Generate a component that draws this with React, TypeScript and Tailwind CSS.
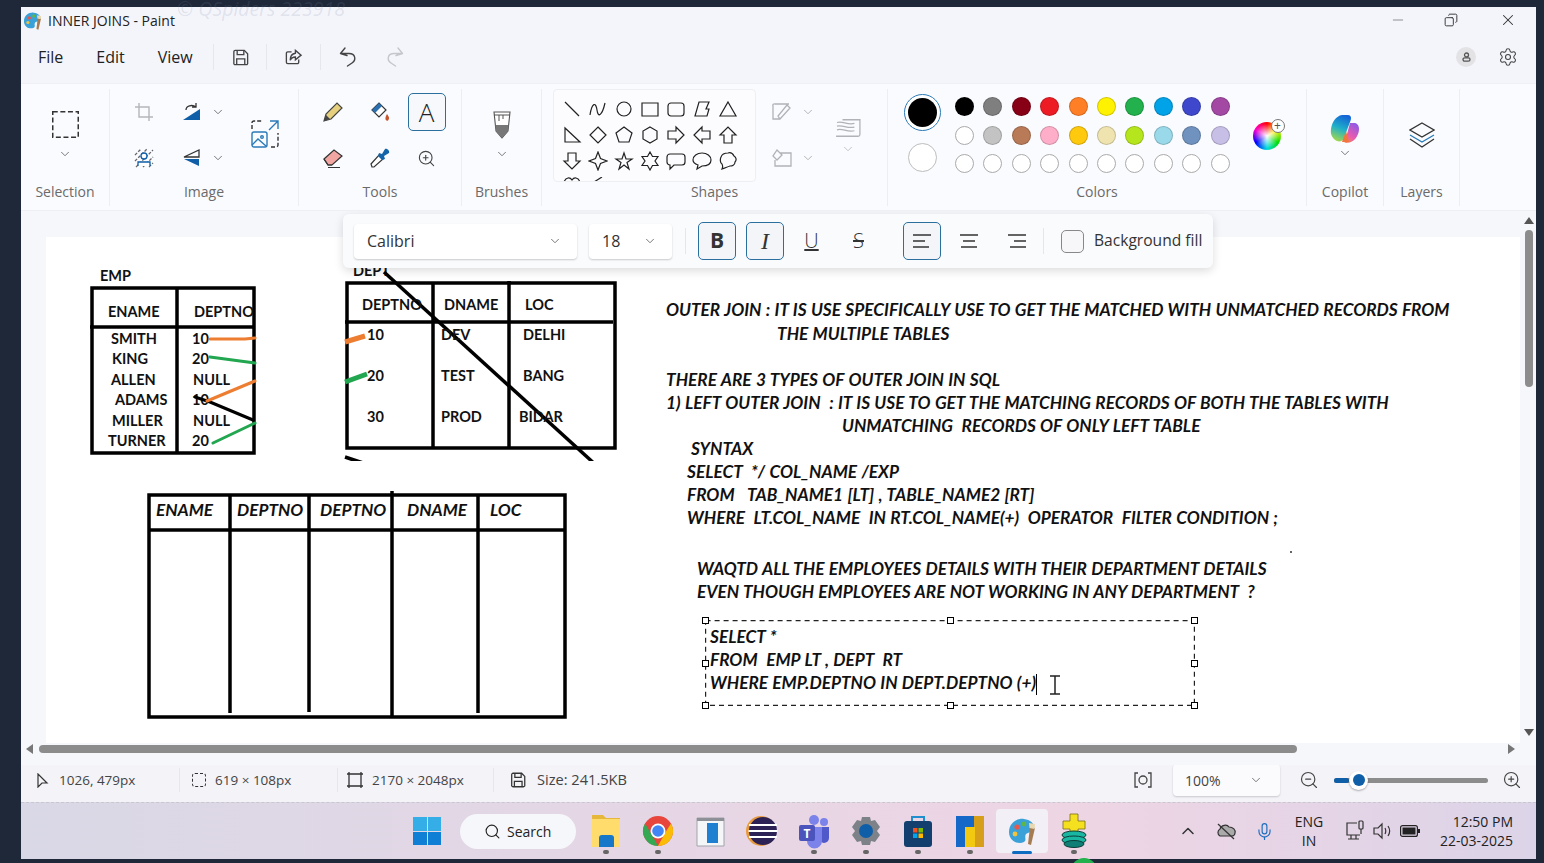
import React from 'react';
import {
  ChevronDown, ChevronUp, Copy, Mic, Minus, Search, Settings, X, ZoomIn, ZoomOut,
} from 'lucide-react';

const ROW1 = ['#000000', '#7f7f7f', '#880015', '#ed1c24', '#ff7f27', '#fff200', '#22b14c', '#00a2e8', '#3f48cc', '#a349a4'];
const ROW2 = ['#ffffff', '#c3c3c3', '#b97a57', '#ffaec9', '#ffc90e', '#efe4b0', '#b5e61d', '#99d9ea', '#7092be', '#c8bfe7'];

const SHAPES = [
  'M3 3L17 17', 'M2 16C4 3 8 3 9 11S14 17 17 4', 'M17 10A7 7 0 1 1 3 10A7 7 0 1 1 17 10Z', 'M2 4H18V17H2Z',
  'M5 4H15A3 3 0 0 1 18 7V14A3 3 0 0 1 15 17H5A3 3 0 0 1 2 14V7A3 3 0 0 1 5 4Z', 'M7 3H17L14 10H17L15 17H3Z', 'M10 3L18 17H2Z',
  'M3 3V17H18Z', 'M10 2L18 10L10 18L2 10Z', 'M10 2L18 8L15 17H5L2 8Z', 'M10 2L17 6V14L10 18L3 14V6Z',
  'M2 6H10V2L18 10L10 18V14H2Z', 'M18 6H10V2L2 10L10 18V14H18Z', 'M6 18V10H2L10 2L18 10H14V18Z',
  'M6 2V10H2L10 18L18 10H14V2Z', 'M10 1L12.5 7.5L19 10L12.5 12.5L10 19L7.5 12.5L1 10L7.5 7.5Z',
  'M10 2L12 8H18L13 11.5L15 18L10 14L5 18L7 11.5L2 8H8Z', 'M10 1L12.5 5.5H18L15 10L18 14.5H12.5L10 19L7.5 14.5H2L5 10L2 5.5H7.5Z',
  'M4 3H16A3 3 0 0 1 19 6V11A3 3 0 0 1 16 14H8L4 18V14A3 3 0 0 1 1 11V6A3 3 0 0 1 4 3Z',
  'M10 2C15 2 19 5 19 9S15 15 10 15L5 18L6 14C3 13 1 11 1 9C1 5 5 2 10 2Z',
  'M10 2C13 1 15 3 16 5C18 6 19 9 17 11C17 14 14 15 12 15C9 16 7 17 4 18C5 16 5 15 4 13C2 12 2 8 3 6C4 3 7 2 10 2Z',
  'M2 5C4 0 8 0 10 3C12 0 16 0 18 5', 'M14 0L6 5',
];

const NOTES: [string, string][] = [
  ['OUTER JOIN : IT IS USE SPECIFICALLY USE TO GET THE MATCHED WITH UNMATCHED RECORDS FROM', 'ml-0 h-[24px]'],
  ['THE MULTIPLE TABLES', 'ml-[111px]'],
  ['\u00a0', 'ml-0'],
  ['THERE ARE 3 TYPES OF OUTER JOIN IN SQL', 'ml-0'],
  ['1) LEFT OUTER JOIN  : IT IS USE TO GET THE MATCHING RECORDS OF BOTH THE TABLES WITH', 'ml-0'],
  ['UNMATCHING  RECORDS OF ONLY LEFT TABLE', 'ml-[176px]'],
  ['SYNTAX', 'ml-[25px]'],
  ['SELECT  */ COL_NAME /EXP', 'ml-[21px]'],
  ['FROM   TAB_NAME1 [LT] , TABLE_NAME2 [RT]', 'ml-[21px]'],
  ['WHERE  LT.COL_NAME  IN RT.COL_NAME(+)  OPERATOR  FILTER CONDITION ;', 'ml-[21px]'],
];

const APPS = ['explorer', 'chrome', 'box', 'eclipse', 'teams', 'settings', 'store', 'bi', 'paint', 'db'];

const Chev = ({ className = '' }: { className?: string }) => (
  <ChevronDown className={`w-[14px] h-[14px] text-[#666] ${className}`} strokeWidth={1.5} />
);

const PaintIcon = ({ size }: { size: number }) => (
  <svg width={size} height={size} viewBox="0 0 32 32">
    <path d="M3 17C3 8 11 3 18 4C25 5 29 9 28 14C27 18 22 17 20 19C18 22 21 25 18 27C12 30 3 26 3 17Z" fill="#3aa0d8" />
    <circle cx="11" cy="12" r="2.6" fill="#e9574b" />
    <circle cx="18" cy="9" r="2.4" fill="#5fb648" />
    <circle cx="9" cy="19" r="2.4" fill="#f3c33c" />
    <path d="M24 12L29 13L25 30L22 29Z" fill="#a57c52" />
    <path d="M23 8L29 9L28.5 14L23.5 13Z" fill="#e8d9b4" />
  </svg>
);

const AppIcon = ({ name }: { name: string }) => {
  if (name === 'explorer') return (
    <svg width="32" height="40" viewBox="0 0 32 40">
      <path d="M2 4H13L16 7H30V36H2Z" fill="#e5b83c" /><path d="M2 8H30V36H2Z" fill="#ffdc6b" />
      <path d="M9 27A3 3 0 0 1 12 24H21A3 3 0 0 1 24 27V36H9Z" fill="#1778c9" />
    </svg>
  );
  if (name === 'chrome') return (
    <svg width="32" height="40" viewBox="0 0 32 40">
      <circle cx="16" cy="20" r="15" fill="#e8453c" />
      <path d="M16 35A15 15 0 0 1 3 12.5L10 24L16 35Z" fill="#34a853" />
      <path d="M16 35L23 22L29 12.5A15 15 0 0 1 16 35Z" fill="#fbbc05" />
      <circle cx="16" cy="20" r="7.5" fill="#fff" /><circle cx="16" cy="20" r="5.8" fill="#4285f4" />
    </svg>
  );
  if (name === 'box') return (
    <svg width="32" height="40" viewBox="0 0 32 40">
      <path d="M3 7H30V35H3Z" fill="#f4f6f8" stroke="#a0a4aa" /><path d="M3 7H30V10H3Z" fill="#8d9197" />
      <path d="M13 12H24V32H13Z" fill="#1f7fd1" />
    </svg>
  );
  if (name === 'eclipse') return (
    <svg width="32" height="40" viewBox="0 0 32 40">
      <circle cx="15" cy="20" r="15" fill="#e89a3c" /><circle cx="17" cy="20" r="14" fill="#2c2255" />
      <path d="M3 14H31M2.5 20H31.5M3 26H31" stroke="#ffffff" strokeWidth="2" />
    </svg>
  );
  if (name === 'teams') return (
    <svg width="32" height="40" viewBox="0 0 32 40">
      <circle cx="26" cy="11" r="4" fill="#7b83eb" /><circle cx="16" cy="9" r="5" fill="#7b83eb" />
      <path d="M21 16H31V27A5 5 0 0 1 21 27Z" fill="#5059c9" /><path d="M9 16H24V30A7 7 0 0 1 9 30Z" fill="#7b83eb" />
      <rect x="1" y="14" width="16" height="16" rx="2" fill="#4b53bc" />
      <text x="9" y="27" fontSize="12" fontWeight="700" textAnchor="middle" fill="#fff" fontFamily="Open Sans, sans-serif">T</text>
    </svg>
  );
  if (name === 'settings') return (
    <svg width="32" height="40" viewBox="0 0 32 40">
      <path d="M12 6H20L21 10L25 9L30 16L27 20L30 24L25 31L21 30L20 34H12L11 30L7 31L2 24L5 20L2 16L7 9L11 10Z" fill="#7d8288" />
      <circle cx="16" cy="20" r="7" fill="#0f5ea8" />
    </svg>
  );
  if (name === 'store') return (
    <svg width="32" height="40" viewBox="0 0 32 40">
      <path d="M10 10V6H22V10" fill="none" stroke="#1f8fd0" strokeWidth="2" />
      <rect x="2" y="10" width="28" height="26" rx="3" fill="#123f6d" />
      <path d="M11 17H15.5V21.5H11Z" fill="#f25022" /><path d="M16.5 17H21V21.5H16.5Z" fill="#7fba00" />
      <path d="M11 22.5H15.5V27H11Z" fill="#00a4ef" /><path d="M16.5 22.5H21V27H16.5Z" fill="#ffb900" />
    </svg>
  );
  if (name === 'bi') return (
    <svg width="32" height="40" viewBox="0 0 32 40">
      <path d="M2 5H30V36H2Z" fill="#1668c8" /><path d="M20 5H30V36H20Z" fill="#d69e19" />
      <path d="M11 16H21V36H11Z" fill="#f2c811" />
    </svg>
  );
  if (name === 'paint') return <PaintIcon size={32} />;
  return (
    <svg width="32" height="40" viewBox="0 0 32 40">
      <path d="M12 3H20V10H27V18H20V22H12V18H5V10H12Z" fill="#f5e020" stroke="#7a7010" strokeWidth="0.8" />
      <ellipse cx="16" cy="24" rx="12" ry="4" fill="#19b6a2" stroke="#0b3d38" />
      <ellipse cx="16" cy="29" rx="12" ry="4" fill="#19b6a2" stroke="#0b3d38" />
      <ellipse cx="16" cy="33" rx="10" ry="3.5" fill="#0f7f76" stroke="#0b3d38" />
    </svg>
  );
};

const EmpTable = () => (
  <svg className="absolute left-0 top-0 w-full h-full" viewBox="46 237 1474 506" fontFamily="Lato, sans-serif" fontWeight="700" fontSize="14.5" fill="#111">
    <text x="100" y="281">EMP</text>
    <g fill="none" stroke="#000" strokeWidth="3.5">
      <path d="M92 288H254V453H92Z" /><path d="M177 288V453" /><path d="M90 327H254" />
    </g>
    <text x="108" y="317">ENAME</text><text x="194" y="317">DEPTNO</text>
    <text x="111" y="344">SMITH</text><text x="192" y="344">10</text>
    <text x="112" y="364">KING</text><text x="192" y="364">20</text>
    <text x="111" y="385">ALLEN</text><text x="193" y="385">NULL</text>
    <text x="115" y="405">ADAMS</text><text x="192" y="405">10</text>
    <text x="112" y="426">MILLER</text><text x="193" y="426">NULL</text>
    <text x="108" y="446">TURNER</text><text x="192" y="446">20</text>
    <g fill="none" strokeWidth="3" strokeLinecap="round">
      <path d="M210 339H245L255 338" stroke="#ed7d31" />
      <path d="M210 357L255 363" stroke="#22a650" />
      <path d="M195 397L210 402L253 420" stroke="#000" />
      <path d="M207 401L255 381" stroke="#ed7d31" />
      <path d="M213 443L255 423" stroke="#22a650" />
    </g>

    <text x="353" y="276">DEPT</text>
    <g fill="none" stroke="#000" strokeWidth="3.5">
      <path d="M347 283H615V448H347Z" /><path d="M433 283V448" /><path d="M509 281V448" /><path d="M345 322H613" />
      <path d="M384 272L597 466" /><path d="M345 457L366 464" />
    </g>
    <rect x="340" y="461" width="280" height="10" fill="#fff" />
    <text x="362" y="310">DEPTNO</text><text x="444" y="310">DNAME</text><text x="525" y="310">LOC</text>
    <text x="367" y="340">10</text><text x="441" y="340">DEV</text><text x="523" y="340">DELHI</text>
    <text x="367" y="381">20</text><text x="441" y="381">TEST</text><text x="523" y="381">BANG</text>
    <text x="367" y="422">30</text><text x="441" y="422">PROD</text><text x="519" y="422">BIDAR</text>
    <path d="M345 342L365 336" stroke="#ed7d31" strokeWidth="5" /><path d="M345 382L367 374" stroke="#22a650" strokeWidth="5" />

    <g fill="none" stroke="#000" strokeWidth="3.5">
      <path d="M149 495H565V717H149Z" /><path d="M149 530H565" />
      <path d="M230 495V713" /><path d="M309 495V712" /><path d="M392 491V717" /><path d="M478 495V713" />
    </g>
    <g fontSize="17.2" fontStyle="italic">
      <text x="156" y="516">ENAME</text><text x="237" y="516">DEPTNO</text><text x="320" y="516">DEPTNO</text>
      <text x="407" y="516">DNAME</text><text x="490" y="516">LOC</text>
    </g>
    <circle cx="1291" cy="552" r="1" fill="#333" />
  </svg>
);

const Handle = ({ className }: { className: string }) => (
  <span className={`absolute w-[7px] h-[7px] bg-white border border-black ${className}`} />
);

const Section = ({ width, label, children }: { width: string; label: string; children: React.ReactNode }) => (
  <section className={`${width} h-[117px] shrink-0 flex flex-col border-r border-[#eceef2]`}>
    <div className="h-[92px] flex">{children}</div>
    <div className="h-[21px] flex items-center justify-center text-[14px] text-[#6a6a6a]">{label}</div>
  </section>
);

const Cell = ({ className = '', children }: { className?: string; children: React.ReactNode }) => (
  <div className={`h-[46px] flex items-center justify-center ${className}`}>{children}</div>
);

export default function App() {
  return (
    <div className="w-[1544px] h-[863px] bg-[#1e2839] pl-[21px] pt-[7px] overflow-hidden relative font-['Open_Sans',sans-serif]">
      <div className="w-[1515px] h-[852px] flex flex-col bg-[#f4f5fb]">
        {/* Title bar */}
        <header className="h-[25px] shrink-0 flex items-center relative text-[#222]">
          <span className="ml-[1px] mr-[5px] mt-[2px]"><PaintIcon size={21} /></span>
          <span className="text-[14px] mt-[1px]">INNER JOINS - Paint</span>
          <span className="absolute left-[156px] -top-[7px] text-[19.5px] leading-[17px] italic text-[#7882a02e] whitespace-nowrap">© QSpiders 223918</span>
          <div className="ml-auto flex items-center mt-[1px] mr-[19px] text-[#333]">
            <Minus className="w-[16px] h-[16px] mr-[38px] text-[#777]" strokeWidth={1.2} />
            <Copy className="w-[14px] h-[14px] mr-[41px] -scale-x-100" strokeWidth={1.6} />
            <X className="w-[18px] h-[18px]" strokeWidth={1.4} />
          </div>
        </header>

        {/* Menu row */}
        <nav className="h-[51px] shrink-0 flex items-center text-[16px] text-[#222] pb-[1px]">
          <span className="ml-[17px]">File</span>
          <span className="ml-[33px]">Edit</span>
          <span className="ml-[33px]">View</span>
          <span className="ml-[20px] w-px h-[26px] bg-[#e6e7ec]" />
          <svg className="ml-[17px]" width="19" height="19" viewBox="0 0 20 20" fill="none" stroke="#444" strokeWidth="1.4">
            <path d="M3 4A1.5 1.5 0 0 1 4.5 2.5H14L17.5 6V15.5A1.5 1.5 0 0 1 16 17.5H4.5A1.5 1.5 0 0 1 3 15.5Z" />
            <path d="M6.5 2.5V7H13.5V2.5M6 17.5V11.5H14.5V17.5" />
          </svg>
          <span className="ml-[16px] w-px h-[26px] bg-[#e6e7ec]" />
          <svg className="ml-[17px]" width="19" height="19" viewBox="0 0 20 20" fill="none" stroke="#444" strokeWidth="1.4">
            <path d="M8 4H4A1.5 1.5 0 0 0 2.5 5.5V15A1.5 1.5 0 0 0 4 16.5H14A1.5 1.5 0 0 0 15.5 15V12" />
            <path d="M12 2.5L18 7.5L12 12.5V9.5C9.5 9.5 7.5 10.5 6.5 13C6.5 9 8.5 6 12 5.5Z" />
          </svg>
          <span className="ml-[17px] w-px h-[26px] bg-[#e6e7ec]" />
          <svg className="ml-[18px]" width="18" height="20" viewBox="0 0 18 20" fill="none" stroke="#444" strokeWidth="1.4" strokeLinecap="round" strokeLinejoin="round">
            <path d="M6 1L1.5 6.5L8 8.5M1.5 6.5H10C16.5 6.5 17.5 13 13 16L8.5 19" />
          </svg>
          <svg className="ml-[29px]" width="18" height="20" viewBox="0 0 18 20" fill="none" stroke="#c4c6cc" strokeWidth="1.4" strokeLinecap="round" strokeLinejoin="round">
            <path d="M12 1L16.5 6.5L10 8.5M16.5 6.5H8C1.5 6.5 .5 13 5 16L9.5 19" />
          </svg>
          <span className="ml-auto w-[20px] h-[20px] rounded-full bg-[#e3e3e6] flex items-center justify-center">
            <svg width="9" height="10" viewBox="0 0 9 10" fill="none" stroke="#555" strokeWidth="1.3"><circle cx="4.5" cy="3" r="2" /><rect x="1" y="5.8" width="7" height="3.4" rx="1.6" /></svg>
          </span>
          <Settings className="ml-[22px] mr-[18px] w-[20px] h-[20px] text-[#444]" strokeWidth={1.3} />
        </nav>

        {/* Ribbon */}
        <div className="h-[128px] shrink-0 flex pt-[5px] bg-[#fafbfe] border-t border-[#eff0f5] border-b border-b-[#eeeff3]">
          <Section width="w-[89px]" label="Selection">
            <div className="w-full flex flex-col items-center pt-[22px]">
              <svg width="27" height="27" viewBox="0 0 27 27" fill="none" stroke="#333" strokeWidth="1.5"><path d="M.75 .75H26.25V26.25H.75Z" strokeDasharray="5 2.6" /></svg>
              <Chev className="mt-[9px]" />
            </div>
          </Section>

          <Section width="w-[189px]" label="Image">
            <div className="grid grid-cols-[66px_55px] pl-[1px] content-start">
              <Cell>
                <svg width="22" height="22" viewBox="0 0 22 22" fill="none" stroke="#b4b6bb" strokeWidth="1.4"><path d="M6 2V16H20M2 6H16V20" /></svg>
              </Cell>
              <Cell className="justify-start gap-[9px] pl-[5px]">
                <svg width="20" height="20" viewBox="0 0 20 20"><path d="M1 18L18 7V18Z" fill="#0f5ea8" /><path d="M4 8C4 4 10 2 14 5M14 1V5H10" fill="none" stroke="#333" strokeWidth="1.3" /></svg>
                <Chev />
              </Cell>
              <Cell>
                <svg width="22" height="22" viewBox="0 0 22 22" fill="none" stroke="#666" strokeWidth="1.3"><path d="M2 8L8 2M2 14L14 2M3 20L20 3M10 20L20 10M16 20L20 16" strokeDasharray="3 1.5" /><circle cx="11" cy="9" r="3" stroke="#0f5ea8" fill="#fff" /><path d="M5 19V15H17V19" stroke="#0f5ea8" fill="#fff" /></svg>
              </Cell>
              <Cell className="justify-start gap-[9px] pl-[5px]">
                <svg width="20" height="20" viewBox="0 0 20 20"><path d="M2 9L17 2V9Z" fill="none" stroke="#333" strokeWidth="1.3" /><path d="M2 11H17V18Z" fill="#0f5ea8" /></svg>
                <Chev />
              </Cell>
            </div>
            <div className="flex items-center pl-[19px] -mt-[1px] h-[92px]">
              <svg width="28" height="28" viewBox="0 0 28 28" fill="none" strokeWidth="1.4" stroke="#333">
                <path d="M1 9V3A2 2 0 0 1 3 1H12M20 27H25A2 2 0 0 0 27 25V13" strokeDasharray="4 2" />
                <path d="M19 1H27V9M27 1L18 10" stroke="#2a7ab8" />
                <rect x="1" y="12" width="15" height="15" rx="2" stroke="#2a7ab8" />
                <path d="M1 25L7 19L15 26" stroke="#2a7ab8" /><circle cx="11" cy="17" r="1.3" stroke="#2a7ab8" />
              </svg>
            </div>
          </Section>

          <Section width="w-[163px]" label="Tools">
            <div className="grid grid-cols-[47px_47px_47px] pl-[10px] content-start">
              <Cell>
                <svg width="22" height="22" viewBox="0 0 22 22"><path d="M2 20L4 13L15 2L20 7L9 18Z" fill="#e6cf7d" stroke="#444" strokeWidth="1.2" /><path d="M2 20L4 14L8 18Z" fill="#444" /></svg>
              </Cell>
              <Cell>
                <svg width="22" height="22" viewBox="0 0 22 22"><path d="M3 9L10 2L17 9L10 16Z" fill="#fff" stroke="#333" strokeWidth="1.2" /><path d="M3 9L10 2L13 5L6 12Z" fill="#2a6fb0" /><path d="M18 13C20 16 21 17 19 19.5C17 20.5 15 18 18 13Z" fill="#c4572c" /></svg>
              </Cell>
              <div className="h-[46px] flex items-center justify-center">
                <span className="w-[38px] h-[38px] rounded-[5px] border-[1.5px] border-[#2b6f9e] bg-[#f6f8fb] flex items-center justify-center text-[26px] font-light text-[#222]">A</span>
              </div>
              <Cell>
                <svg width="22" height="22" viewBox="0 0 22 22"><path d="M2 12L12 3L20 9L10 18H6Z" fill="#f2a6a2" stroke="#333" strokeWidth="1.2" /><path d="M2 12L6 18H10M6 20.5H18" fill="none" stroke="#333" strokeWidth="1.2" /></svg>
              </Cell>
              <Cell>
                <svg width="22" height="22" viewBox="0 0 22 22"><path d="M3 20L2 17L10 8L14 12L5 20Z" fill="#fff" stroke="#333" strokeWidth="1.2" /><path d="M10 6L13 7L16 2C18 1 21 4 20 6L15 9L16 12L13 13L9 9Z" fill="#1265a8" /></svg>
              </Cell>
              <Cell>
                <ZoomIn className="w-[19px] h-[19px] text-[#444]" strokeWidth={1.4} />
              </Cell>
            </div>
          </Section>

          <Section width="w-[80px]" label="Brushes">
            <div className="w-full flex flex-col items-center pt-[22px]">
              <svg width="18" height="28" viewBox="0 0 18 28"><path d="M1 1H17L15 20L9 27L3 20Z" fill="#fff" stroke="#555" strokeWidth="1.1" /><path d="M2.5 14H15.5L15 20L9 27L3 20Z" fill="#777" /><path d="M1 4H17M6 4V10M10 4V8" stroke="#555" fill="none" /></svg>
              <Chev className="mt-[8px]" />
            </div>
          </Section>

          <Section width="w-[346px]" label="Shapes">
            <div className="w-full flex relative">
              <div className="ml-[11px] w-[203px] h-[93px] rounded-[4px] border border-[#eeeff3] bg-[#fcfcfe] overflow-hidden grid grid-cols-[repeat(7,26px)] auto-rows-[26px] pl-[5px] pt-[6px]">
                {SHAPES.map((d, i) => (
                  <div key={i} className="flex items-center justify-center">
                    <svg width="20" height="20" viewBox="0 0 20 20" fill="none" stroke="#222" strokeWidth="1.2"><path d={d} /></svg>
                  </div>
                ))}
              </div>
              <div className="ml-[16px] flex flex-col">
                <Cell className="gap-[9px]">
                  <svg width="20" height="20" viewBox="0 0 20 20" fill="none" stroke="#b0b2b8" strokeWidth="1.3"><path d="M17 2H3A1.5 1.5 0 0 0 1 4V17H8M8 17L18 6L15 3L6 14Z" /></svg>
                  <Chev className="text-[#aaa]" />
                </Cell>
                <Cell className="gap-[9px]">
                  <svg width="20" height="20" viewBox="0 0 20 20" fill="none" stroke="#b0b2b8" strokeWidth="1.3"><path d="M8 5H19V18H3V12M5 2L10 7L5 12L1 8Z" /></svg>
                  <Chev className="text-[#aaa]" />
                </Cell>
              </div>
              <div className="ml-[19px] flex flex-col items-center pt-[28px]">
                <svg width="28" height="22" viewBox="0 0 30 24" fill="none" stroke="#b0b2b8" strokeWidth="1.4"><path d="M2 21H26A2 2 0 0 0 28 19V3H9M3 6C9 4 14 9 22 7M3 10C9 8 14 13 22 11M3 14C9 12 14 17 22 15" /></svg>
                <Chev className="mt-[3px] text-[#bbb]" />
              </div>
            </div>
          </Section>

          <Section width="w-[419px]" label="Colors">
            <div className="w-full flex relative">
              <div className="ml-[15px] flex flex-col items-center pt-[5px] w-[38px]">
                <span className="w-[37px] h-[37px] rounded-full border-[1.5px] border-[#2b7ab5] p-[3px] bg-white">
                  <span className="block w-full h-full rounded-full bg-black" />
                </span>
                <span className="mt-[12px] w-[29px] h-[29px] rounded-full bg-white border-[1.5px] border-[#bdbdbd]" />
              </div>
              <div className="ml-[14px] grid grid-cols-[repeat(10,19px)] gap-x-[9.4px] gap-y-[9.5px] content-start pt-[8px]">
                {ROW1.map(c => <span key={c} className="w-[19px] h-[19px] rounded-full border border-[#0000002e]" style={{ backgroundColor: c }} />)}
                {ROW2.map(c => <span key={c} className={`w-[19px] h-[19px] rounded-full border ${c === '#ffffff' ? 'border-[#aaa]' : 'border-[#0000002e]'}`} style={{ backgroundColor: c }} />)}
                {ROW1.map(c => <span key={c} className="w-[19px] h-[19px] rounded-full border border-[#aaa] bg-white" />)}
              </div>
              <div className="ml-[23px] mt-[33px] relative w-[28px] h-[28px] rounded-full [background:radial-gradient(circle,white_0%,transparent_62%),conic-gradient(#ff0000,#ffee00,#00dd00,#00dddd,#0000ff,#ff00cc,#ff0000)]">
                <span className="absolute -right-[4px] -top-[3px] w-[14px] h-[14px] rounded-full bg-white border border-[#777] flex items-center justify-center text-[12px] leading-none text-[#555]">+</span>
              </div>
            </div>
          </Section>

          <Section width="w-[77px]" label="Copilot">
            <div className="w-full flex flex-col items-center pt-[25px]">
              <svg width="30" height="30" viewBox="0 0 30 30">
                <defs>
                  <linearGradient id="cpA" x1="0.6" y1="0" x2="0.3" y2="1"><stop offset="0" stopColor="#1565d8" /><stop offset="0.5" stopColor="#1fb0c8" /><stop offset="1" stopColor="#a6d84a" /></linearGradient>
                  <linearGradient id="cpB" x1="0.8" y1="0" x2="0.2" y2="1"><stop offset="0" stopColor="#8a5be8" /><stop offset="0.6" stopColor="#e85ab0" /><stop offset="1" stopColor="#f58a5a" /></linearGradient>
                </defs>
                <path d="M12 1H18C21 1 22 4 20 8L14 24C13 27 10 28 7 27C3 25 0 21 1 15C2 8 6 2 12 1Z" fill="url(#cpA)" />
                <path d="M20 9H25C29 10 30 15 28 20C26 26 21 29 16 29L12 27C15 26 16 24 17 20Z" fill="url(#cpB)" />
                <path d="M12 28L16 17L19 28Z" fill="#f0763c" />
              </svg>
              <Chev className="mt-[2px]" />
            </div>
          </Section>

          <Section width="w-[76px]" label="Layers">
            <div className="w-full flex justify-center pt-[33px]">
              <svg width="26" height="26" viewBox="0 0 26 26" fill="none" stroke="#333" strokeWidth="1.3">
                <path d="M13 1L25 8L13 15L1 8Z" /><path d="M1 13L13 20L25 13" stroke="#2a7ab8" /><path d="M1 17L13 25L25 17" />
              </svg>
            </div>
          </Section>
        </div>

        {/* Canvas area */}
        <main className="h-[554px] shrink-0 relative pl-[25px] pt-[26px] pr-[16px] pb-[22px] overflow-hidden bg-[#f6f7fb]">
          <div className="relative w-full h-full bg-white overflow-hidden">
            <EmpTable />
            <div className="absolute left-[620px] top-[61px] w-[820px] font-['Lato',sans-serif] font-bold italic text-[17.3px] leading-[23px] [word-spacing:0.5px] text-[#111] whitespace-pre">
              {NOTES.map(([line, indent], i) => <div key={i} className={indent}>{line}</div>)}
              <div className="ml-[31px] mt-[28px]">WAQTD ALL THE EMPLOYEES DETAILS WITH THEIR DEPARTMENT DETAILS</div>
              <div className="ml-[31px]">EVEN THOUGH EMPLOYEES ARE NOT WORKING IN ANY DEPARTMENT  ?</div>
            </div>
            {/* Text tool box */}
            <div className="absolute left-[659px] top-[383px] w-[490px] h-[86px] pl-[5px] pt-[5px] font-['Lato',sans-serif] font-bold italic text-[17.3px] leading-[23px] [word-spacing:0.5px] text-[#111] whitespace-pre">
              <svg className="absolute left-0 top-0" width="490" height="86" viewBox="0 0 490 86" fill="none" stroke="#222" strokeWidth="1.2"><rect x="0.6" y="0.6" width="488.8" height="84.8" strokeDasharray="5 4" /></svg>
              <div>SELECT *</div>
              <div>FROM  EMP LT , DEPT  RT</div>
              <div>WHERE EMP.DEPTNO IN DEPT.DEPTNO (+)<span className="inline-block w-px h-[21px] bg-black align-middle" /></div>
              <Handle className="-left-[3px] -top-[3px]" /><Handle className="left-[242px] -top-[3px]" /><Handle className="-right-[3px] -top-[3px]" />
              <Handle className="-left-[3px] top-[40px]" /><Handle className="-right-[3px] top-[40px]" />
              <Handle className="-left-[3px] -bottom-[3px]" /><Handle className="left-[242px] -bottom-[3px]" /><Handle className="-right-[3px] -bottom-[3px]" />
              <svg className="absolute left-[344px] top-[55px]" width="12" height="20" viewBox="0 0 12 20" fill="none" stroke="#222" strokeWidth="1.5"><path d="M1 1H11M6 1V19M1 19H11" /></svg>
            </div>
          </div>

          {/* Floating text toolbar */}
          <div className="absolute left-[322px] top-[3px] w-[870px] h-[54px] rounded-[6px] bg-[#fafbfd] shadow-[0_3px_10px_rgba(0,0,0,0.14)] flex items-center pl-[11px] text-[#333]">
            <div className="w-[223px] h-[35px] rounded-[4px] bg-white shadow-[0_1px_2px_rgba(0,0,0,0.2)] flex items-center justify-between pl-[13px] pr-[15px] text-[16px]">
              Calibri <Chev />
            </div>
            <div className="ml-[12px] w-[83px] h-[35px] rounded-[4px] bg-white shadow-[0_1px_2px_rgba(0,0,0,0.2)] flex items-center justify-between pl-[13px] pr-[15px] text-[16px]">
              18 <Chev />
            </div>
            <span className="ml-[13px] w-px h-[26px] bg-[#e6e7ec]" />
            <span className="ml-[12px] w-[38px] h-[38px] rounded-[5px] border-[1.5px] border-[#2b6f9e] bg-[#f3f5f9] flex items-center justify-center font-bold text-[21px]">B</span>
            <span className="ml-[10px] w-[38px] h-[38px] rounded-[5px] border-[1.5px] border-[#2b6f9e] bg-[#f3f5f9] flex items-center justify-center italic text-[24px] font-['Liberation_Serif',serif]">I</span>
            <span className="ml-[18px] w-[19px] text-center underline text-[20px] font-light">U</span>
            <span className="ml-[28px] w-[19px] text-center line-through text-[20px] font-light">S</span>
            <span className="ml-[35px] w-[38px] h-[38px] rounded-[5px] border-[1.5px] border-[#2b6f9e] bg-[#f3f5f9] flex items-center justify-center">
              <svg width="20" height="16" viewBox="0 0 20 16" stroke="#333" strokeWidth="1.4"><path d="M1 2H19M1 8H13M1 14H17" /></svg>
            </span>
            <svg className="ml-[18px]" width="20" height="16" viewBox="0 0 20 16" stroke="#333" strokeWidth="1.4"><path d="M1 2H19M4 8H16M2 14H18" /></svg>
            <svg className="ml-[28px]" width="20" height="16" viewBox="0 0 20 16" stroke="#333" strokeWidth="1.4"><path d="M1 2H19M7 8H19M3 14H19" /></svg>
            <span className="ml-[16px] w-px h-[26px] bg-[#e6e7ec]" />
            <span className="ml-[17px] w-[23px] h-[23px] rounded-[5px] border border-[#888] bg-[#f7f7f9]" />
            <span className="ml-[10px] text-[15.6px] whitespace-nowrap">Background fill</span>
          </div>

          {/* Scrollbars */}
          <span className="absolute left-[1504px] top-[19px] w-[8px] h-[157px] rounded-full bg-[#8c8c8c]" />
          <span className="absolute left-[1503px] top-[6px] w-0 h-0 border-x-[5px] border-x-transparent border-b-[7px] border-b-[#555]" />
          <span className="absolute left-[1503px] top-[518px] w-0 h-0 border-x-[5px] border-x-transparent border-t-[7px] border-t-[#555]" />
          <span className="absolute left-[18px] top-[534px] w-[1258px] h-[8px] rounded-full bg-[#8c8c8c]" />
          <span className="absolute left-[5px] top-[533px] w-0 h-0 border-y-[5px] border-y-transparent border-r-[7px] border-r-[#777]" />
          <span className="absolute left-[1487px] top-[533px] w-0 h-0 border-y-[5px] border-y-transparent border-l-[7px] border-l-[#777]" />
        </main>

        {/* Status bar */}
        <footer className="h-[37px] shrink-0 flex items-center pb-[7px] text-[13.5px] text-[#444] bg-[#f3f3f8]">
          <div className="w-[159px] flex items-center pl-[15px] border-r border-[#e6e7ec] h-[24px]">
            <svg width="13" height="15" viewBox="0 0 13 15" fill="none" stroke="#333" strokeWidth="1.2"><path d="M2 1V14L6 10L11 10Z" /></svg>
            <span className="ml-[10px]">1026, 479px</span>
          </div>
          <div className="w-[157px] flex items-center pl-[10px] border-r border-[#e6e7ec] h-[24px] ml-px">
            <span className="ml-[1px] w-[14px] h-[14px] rounded-[3px] border-[1.5px] border-dashed border-[#333]" />
            <span className="ml-[9px]">619 × 108px</span>
          </div>
          <div className="w-[155px] flex items-center pl-[7px] border-r border-[#e6e7ec] h-[24px] ml-px">
            <svg className="ml-[1px]" width="16" height="16" viewBox="0 0 16 16" fill="none" stroke="#333" strokeWidth="1.3"><path d="M0 2H16M0 14H16M2 0V16M14 0V16" /></svg>
            <span className="ml-[9px]">2170 × 2048px</span>
          </div>
          <div className="flex items-center pl-[15px]">
            <svg width="18" height="18" viewBox="0 0 20 20" fill="none" stroke="#333" strokeWidth="1.4">
              <path d="M3 4A1.5 1.5 0 0 1 4.5 2.5H14L17.5 6V15.5A1.5 1.5 0 0 1 16 17.5H4.5A1.5 1.5 0 0 1 3 15.5Z" /><path d="M6.5 2.5V7H13.5V2.5M6 17.5V11.5H14.5V17.5" />
            </svg>
            <span className="ml-[10px] text-[14.6px]">Size: 241.5KB</span>
          </div>
          <div className="ml-auto flex items-center">
            <svg width="18" height="16" viewBox="0 0 18 16" fill="none" stroke="#444" strokeWidth="1.3"><path d="M4 1H1V15H4M14 1H17V15H14" /><circle cx="9" cy="8" r="4" /></svg>
            <div className="ml-[21px] w-[107px] h-[32px] rounded-[4px] bg-[#fbfbfd] shadow-[0_1px_2px_rgba(0,0,0,0.18)] flex items-center justify-between pl-[12px] pr-[17px] text-[14px]">
              100% <Chev />
            </div>
            <ZoomOut className="ml-[19px] w-[20px] h-[20px] text-[#444]" strokeWidth={1.4} />
            <div className="ml-[15px] w-[154px] h-[5px] rounded-full bg-[#8c8c8c] relative">
              <span className="absolute left-0 top-0 w-[15px] h-[5px] rounded-full bg-[#0f5ea8]" />
              <span className="absolute left-[15px] -top-[7px] w-[19px] h-[19px] rounded-full bg-white shadow-[0_1px_2px_rgba(0,0,0,0.3)] flex items-center justify-center">
                <span className="block w-[12px] h-[12px] rounded-full bg-[#0f5ea8]" />
              </span>
            </div>
            <ZoomIn className="ml-[14px] mr-[14px] w-[20px] h-[20px] text-[#444]" strokeWidth={1.4} />
          </div>
        </footer>

        {/* Taskbar */}
        <div className="h-[57px] shrink-0 flex items-center border-t border-dashed border-[#c8c6cf] bg-gradient-to-r from-[#d9d8e6] via-[#eed5e4] via-70% to-[#dcd4e8] text-[#222]">
          <span className="ml-[392px] grid grid-cols-2 gap-[1px] w-[28px] h-[28px]">
            <span className="bg-[#35aee8]" /><span className="bg-[#35aee8]" /><span className="bg-[#0f7fd6]" /><span className="bg-[#0f7fd6]" />
          </span>
          <div className="ml-[19px] w-[116px] h-[35px] rounded-full bg-[#f6f7fb] flex items-center pl-[24px] text-[14px]">
            <Search className="w-[17px] h-[17px]" strokeWidth={1.6} />
            <span className="ml-[6px]">Search</span>
          </div>
          <div className="ml-[4px] flex">
            {APPS.map(a => (
              <div key={a} className={`relative w-[52px] h-[44px] flex items-center justify-center ${a === 'paint' ? 'bg-[#f3eff6] rounded-[4px]' : ''}`}>
                <AppIcon name={a} />
                {a === 'box' || a === 'eclipse' ? null : a === 'paint'
                  ? <span className="absolute left-[16px] -bottom-[1px] w-[20px] h-[3px] rounded-full bg-[#0f6cc0]" />
                  : <span className="absolute left-[23px] -bottom-[1px] w-[6px] h-[4px] rounded-full bg-[#666]" />}
              </div>
            ))}
          </div>
          <ChevronUp className="ml-[78px] w-[20px] h-[20px] text-[#333]" strokeWidth={1.8} />
          <svg className="ml-[17px]" width="22" height="18" viewBox="0 0 22 18" fill="#aaa" stroke="#333" strokeWidth="1.2"><path d="M5 14A4 4 0 0 1 5 7C6 3 12 2 14 5C18 5 21 8 20 11C20 13 18 14 17 14Z" /><path d="M3 2L19 17" fill="none" /></svg>
          <Mic className="ml-[18px] w-[19px] h-[21px] text-[#1f6fc0]" strokeWidth={1.5} />
          <div className="ml-[18px] w-[34px] text-center text-[14px] leading-[19px]">ENG<br />IN</div>
          <svg className="ml-[19px]" width="20" height="22" viewBox="0 0 20 22" fill="none" stroke="#333" strokeWidth="1.2"><path d="M12 3H2V15H15M6 15V19M11 15V19M3 19H14" /><rect x="14" y="1" width="4" height="8" rx="1" /><path d="M16 9V14" /></svg>
          <svg className="ml-[7px]" width="20" height="18" viewBox="0 0 20 18" fill="none" stroke="#333" strokeWidth="1.2"><path d="M2 6H6L10 2V16L6 12H2Z" /><path d="M13 6C14 8 14 10 13 12M16 4C18 7 18 11 16 14" /></svg>
          <svg className="ml-[8px]" width="20" height="12" viewBox="0 0 20 12"><rect x="0.6" y="0.6" width="16.8" height="10.8" rx="2" fill="none" stroke="#222" strokeWidth="1.2" /><rect x="2.5" y="2.5" width="13" height="7" fill="#222" /><rect x="18" y="4" width="2" height="4" fill="#222" /></svg>
          <div className="ml-[8px] w-[85px] text-right text-[14px] leading-[19px] whitespace-nowrap">12:50 PM<br />22-03-2025</div>
        </div>
      </div>
      <span className="absolute left-[1071px] top-[858px] w-[26px] h-[26px] rounded-full bg-[#22b14c]" />
    </div>
  );
}
